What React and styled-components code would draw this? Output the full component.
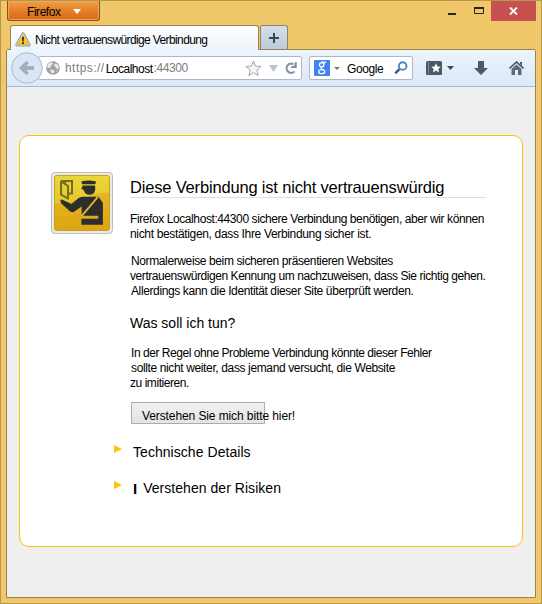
import React from "react";
import styled, { createGlobalStyle } from "styled-components";

const Global = createGlobalStyle`
  * { box-sizing: border-box; }
  body { margin: 0; font-family: "Liberation Sans", Arial, sans-serif; font-size: 12px; color: #000; }
  button { font: inherit; padding: 0; }
  svg { display: block; flex: none; }
`;

const Window = styled.div`
  width: 542px;
  height: 604px;
  border: 1px solid #b6974e;
  background: #f0c869;
  display: flex;
  flex-direction: column;
  padding: 0 5px 5px;
`;

const TitleBar = styled.header`
  height: 24px;
  display: flex;
  justify-content: space-between;
  align-items: flex-start;
`;

const MenuButton = styled.button`
  margin-left: 1px;
  width: 93px;
  height: 20px;
  border: 1px solid #8c4c1c;
  border-top: 0;
  border-radius: 0 0 3px 3px;
  background: linear-gradient(#f0a047, #e5842c 45%, #db6716);
  box-shadow: inset 0 0 0 1px #f1a65c;
  display: flex;
  align-items: center;
  padding: 1px 0 0 19px;
  gap: 12px;
`;

const Controls = styled.div`
  display: flex;
  align-items: flex-start;
`;

const Close = styled.button`
  width: 45px;
  height: 20px;
  border: 0;
  background: #c75050;
  display: flex;
  align-items: center;
  justify-content: center;
`;

const Tabs = styled.div`
  display: flex;
  height: 25px;
  padding-left: 4px;
  align-items: flex-start;
`;

const Tab = styled.div`
  width: 249px;
  height: 25px;
  border: 1px solid #9b8253;
  border-bottom: 0;
  border-radius: 3px 3px 0 0;
  background: linear-gradient(#fff, #edf4fc);
  display: flex;
  align-items: center;
  padding: 3px 0 0 4px;
  gap: 4px;
  position: relative;
  z-index: 1;
`;

const NewTab = styled.button`
  width: 28px;
  height: 24px;
  margin-left: 1px;
  border: 1px solid #8f8368;
  border-bottom: 0;
  border-radius: 2px 3px 0 0;
  background: linear-gradient(#d5dfe9, #bccbdb);
  display: flex;
  align-items: center;
  justify-content: center;
`;

const Frame = styled.main`
  flex: 1;
  margin-top: -1px;
  border: 1px solid #97834f;
  border-radius: 2px 2px 0 0;
  background: #efefef;
  display: flex;
  flex-direction: column;
`;

const Toolbar = styled.nav`
  height: 37px;
  border-bottom: 1px solid #a8bace;
  background: linear-gradient(#edf4fc, #dbe8f7);
  display: flex;
  align-items: center;
  padding: 0 10px 0 4px;
`;

const BackButton = styled.span`
  position: relative;
  z-index: 1;
`;

const Field = styled.div`
  width: ${(p) => p.$width}px;
  height: 24px;
  margin-left: ${(p) => p.$gap}px;
  padding-left: ${(p) => p.$inset}px;
  border: 1px solid #a9b9cb;
  border-radius: 2px;
  background: #fff;
  display: flex;
  flex: none;
  align-items: center;
`;

const Address = styled.div`
  display: flex;
  width: 180px;
  margin-left: 5px;
  padding-top: 1px;
`;

const Actions = styled.div`
  flex: 1;
  display: flex;
  align-items: center;
  padding-left: 13px;
`;

const Spacer = styled.span`
  flex: 0 0 ${(p) => p.$size}px;
`;

const Text = styled.span`
  display: block;
  white-space: nowrap;
  font-size: ${(p) => p.$size || 12}px;
  font-weight: ${(p) => (p.$bold ? 700 : 400)};
  line-height: ${(p) => p.$line || 15}px;
  letter-spacing: ${(p) => p.$track || 0}px;
  color: ${(p) => p.$color || "#000"};
  margin-left: ${(p) => p.$indent || 0}px;
  padding-top: ${(p) => p.$drop || 0}px;
`;

const Panel = styled.section`
  width: 504px;
  height: 412px;
  margin: 48px 0 0 12px;
  border: 1px solid #fcbf13;
  border-radius: 10px;
  background: #fff;
  padding: 36px 0 0 31px;
  display: flex;
  align-items: flex-start;
`;

const Badge = styled.div`
  width: 62px;
  height: 62px;
  border: 1px solid #bcbcbc;
  border-radius: 4px;
  background: #e9e9e9;
  padding: 2px;
`;

const Article = styled.article`
  width: 356px;
  margin-left: 17px;
`;

const Title = styled.h1`
  margin: 0;
  height: 26px;
  padding-top: 5px;
  border-bottom: 1px solid #dedede;
  font-weight: 400;
`;

const Paragraph = styled.div`
  margin-top: ${(p) => p.$top}px;
`;

const Subtitle = styled.h2`
  margin: 16px 0 0;
  font-weight: 400;
`;

const ActionButton = styled.button`
  width: 134px;
  height: 22px;
  margin: 11px 0 0 1px;
  border: 1px solid #acacac;
  background: linear-gradient(#f0f0f0, #e4e4e4);
  display: flex;
  padding: 6px 0 0 10px;
`;

const Disclosure = styled.div`
  height: 18px;
  margin: ${(p) => p.$top}px 0 0 -16px;
  display: flex;
  align-items: flex-start;
`;

const Caret = ({ w = 7, h = 4, color = "#3d4956" }) => (
  <svg width={w} height={h} viewBox="0 0 8 4" preserveAspectRatio="none"><path d="M0 0h8L4 4z" fill={color} /></svg>
);

const Marker = () => (
  <svg width="8" height="8" viewBox="0 0 8 8"><path d="M0 0L8 4L0 8z" fill="#ffc20e" /></svg>
);

const Warning = () => (
  <svg width="16" height="15" viewBox="0 0 16 15">
    <path d="M7 1.2Q8 0 9 1.2L15.2 12.5Q15.6 14 14 14H2Q.4 14 .8 12.5z" fill="#dedede" stroke="#929292" />
    <path d="M8 2.6L13.5 12.5H2.5z" fill="#f5cc16" stroke="#d9a900" strokeWidth=".6" />
    <path d="M7 5h2l-.4 4.5H7.4zM7.1 10.3h1.8V12H7.1z" fill="#222" />
  </svg>
);

const Back = () => (
  <svg width="32" height="32" viewBox="0 0 32 32">
    <circle cx="16" cy="16" r="15.3" fill="#dae6f3" stroke="#a9bace" />
    <path d="M8 16L15.4 8.7L18 11.2L15.2 14H23V18H15.2L18 20.8L15.4 23.3z" fill="#a2aebe" />
  </svg>
);

const Globe = () => (
  <svg width="14" height="14" viewBox="0 0 14 14">
    <circle cx="7" cy="7" r="6.8" fill="#a0a0a0" />
    <path d="M2 3L5 1.2L7 2L5.8 4L4.5 5L5 6.2L3.2 7.2L1.2 6zM8.7 2.5L11 2.8L12.7 5.5L12.5 8L10.5 7.5L9.5 5.8L8 5zM4 8.5L7 8.8L8.6 10L7 12.8L5 11.5zM10.5 9.5L12 9L10.8 11.2z" fill="#e9e9e9" />
  </svg>
);

const Star = () => (
  <svg width="17" height="17" viewBox="0 0 17 17">
    <path d="M8.5 1L10.6 6.1L16.1 6.5L11.9 10.1L13.2 15.6L8.5 12.6L3.8 15.6L5.1 10.1L.9 6.5L6.4 6.1z" fill="#f5f5f5" stroke="#a4a8ad" />
  </svg>
);

const Reload = () => (
  <svg width="12" height="12" viewBox="0 0 12 12">
    <path d="M9.6 9.4A4.6 4.6 0 1 1 8.4 2.2" fill="none" stroke="#8593a1" strokeWidth="2.1" />
    <path d="M11.8 0V6H5.8V4.3H8L9.8 2.5V0z" fill="#8593a1" />
  </svg>
);

const Google = () => (
  <svg width="16" height="16" viewBox="0 0 16 16">
    <rect width="16" height="16" rx="1" fill="#4283ef" />
    <ellipse cx="7.6" cy="4.8" rx="2.1" ry="2.2" fill="none" stroke="#fff" strokeWidth="1.3" />
    <path d="M7.6 2H12L11 3.1H9zM7.3 7Q5.8 8.4 8.2 9.2Q10.8 10 10.6 11.6" fill="none" stroke="#fff" />
    <ellipse cx="7.7" cy="11.7" rx="3" ry="2" fill="none" stroke="#fff" strokeWidth="1.2" />
  </svg>
);

const Magnifier = () => (
  <svg width="14" height="14" viewBox="0 0 14 14" fill="none">
    <path d="M1.2 12.4L5.4 8.2" stroke="#33608d" strokeWidth="2.5" />
    <circle cx="8.7" cy="5" r="3.8" stroke="#4688c3" strokeWidth="1.9" />
  </svg>
);

const Bookmarks = () => (
  <svg width="16" height="14" viewBox="0 0 16 14">
    <rect width="16" height="14" rx="1.5" fill="#4b5967" />
    <path d="M2.5 1v12" stroke="#7b8795" />
    <path d="M10 2.3L11.4 5.4L14.8 5.7L12.3 8L13 11.4L10 9.6L7 11.4L7.7 8L5.2 5.7L8.6 5.4z" fill="#fff" />
  </svg>
);

const Download = () => (
  <svg width="14" height="14" viewBox="0 0 14 14"><path d="M4 0h6v7h4l-7 7L0 7h4z" fill="#4c5a68" /></svg>
);

const Home = () => (
  <svg width="15" height="14" viewBox="0 0 15 14">
    <path d="M.5 7.5L7.5 1L14.5 7.5" fill="none" stroke="#4c5a68" strokeWidth="1.7" />
    <path d="M2.5 8L7.5 3.5L12.5 8V14H9V9H6V14H2.5z" fill="#5d6976" />
    <path d="M11 1h2v4l-2-2z" fill="#4c5a68" />
  </svg>
);

const Officer = () => (
  <svg width="56" height="56" viewBox="0 0 56 56">
    <defs>
      <linearGradient id="gold" x2="0" y2="1"><stop stopColor="#ead838" /><stop offset="1" stopColor="#e3b51c" /></linearGradient>
      <linearGradient id="amber" x2="0" y2="1"><stop stopColor="#e2b721" /><stop offset="1" stopColor="#dca613" /></linearGradient>
    </defs>
    <rect x=".5" y=".5" width="55" height="55" rx="2" fill="url(#gold)" stroke="#c9a11b" />
    <path d="M1 29Q25 27 38 20Q46 17 55 18V53Q55 55 53 55H3Q1 55 1 53z" fill="url(#amber)" />
    <path d="M7 6H18V18.5H15M7 6V19.5L14 23.5V11L7 6.5M11 6V9" fill="none" stroke="#786c24" strokeWidth="2" />
    <g fill="#2d2d2d">
      <path d="M27.3 6.4Q35 4.6 42 6.4L41.3 9.2H28.3zM28.5 10.4H41V12H41.3Q42 19.8 35.5 19.8Q31 19.8 30 15.5L27 13.2Q28.5 12.8 28.5 10.4z" />
      <path d="M6.4 25Q7.5 23.8 10 25.6L17.5 29L24 23.5Q26 21.7 29 21.7H43.3L27.6 40V31.5L20.5 36.5Q18.5 37.8 16.2 36.5L9 30Q6 27.5 6.4 25z" />
      <path d="M44.5 21.7L48.9 28V49.7H27.4V43.7H44.3V40.7H28.5z" />
    </g>
    <path d="M43.8 22L27.8 41" stroke="#e2ba24" strokeWidth="1.8" />
  </svg>
);

export default function App() {
  return (
    <>
      <Global />
      <Window>
        <TitleBar>
          <MenuButton>
            <Text $track={-0.45} $drop={2}>Firefox</Text>
            <Caret w={8} h={5} color="#fff" />
          </MenuButton>
          <Controls>
            <svg width="43" height="20" viewBox="0 0 43 20">
              <path d="M0 12h8v2H0z" fill="#29251c" />
              <path d="M26.5 7.5h9v5h-9z" fill="none" stroke="#29251c" />
              <path d="M26 6h10v2H26z" fill="#29251c" />
            </svg>
            <Close aria-label="Schließen">
              <svg width="9" height="8" viewBox="0 0 9 8"><path d="M1 .5L8 7.5M8 .5L1 7.5" stroke="#fff" strokeWidth="1.8" /></svg>
            </Close>
          </Controls>
        </TitleBar>
        <Tabs>
          <Tab>
            <Warning />
            <Text $track={-0.62} $drop={1}>Nicht vertrauenswürdige Verbindung</Text>
          </Tab>
          <NewTab aria-label="Neuer Tab">
            <svg width="10" height="10" viewBox="0 0 10 10"><path d="M4 0h2v4h4v2H6v4H4V6H0V4h4z" fill="#3b4652" /></svg>
          </NewTab>
        </Tabs>
        <Frame>
          <Toolbar>
            <BackButton><Back /></BackButton>
            <Field $width={264} $gap={-5} $inset={7}>
              <Globe />
              <Address>
                <Text $color="#7c7c7c" $track={0.45}>https://</Text>
                <Text $track={-0.5} $indent={1} $drop={1}>Localhost</Text>
                <Text $color="#7c7c7c" $track={-0.4} $indent={1}>:44300</Text>
              </Address>
              <Star />
              <Spacer $size={7} />
              <Caret w={9} h={7} color="#b8c3d0" />
              <Spacer $size={7} />
              <Reload />
            </Field>
            <Field $width={104} $gap={7} $inset={4}>
              <Google />
              <Spacer $size={4} />
              <Caret w={6} h={3} color="#777" />
              <Text $track={-0.4} $indent={7} $drop={3}>Google</Text>
              <Spacer $size={11} />
              <Magnifier />
            </Field>
            <Actions>
              <Bookmarks />
              <Spacer $size={5} />
              <Caret />
              <Spacer $size={20} />
              <Download />
              <Spacer $size={21} />
              <Home />
            </Actions>
          </Toolbar>
          <Panel>
            <Badge><Officer /></Badge>
            <Article>
              <Title><Text $size={16.5} $line={20} $track={-0.18}>Diese Verbindung ist nicht vertrauenswürdig</Text></Title>
              <Paragraph $top={14}>
                <Text $track={-0.41}>Firefox Localhost:44300 sichere Verbindung benötigen, aber wir können</Text>
                <Text $track={-0.34}>nicht bestätigen, dass Ihre Verbindung sicher ist.</Text>
              </Paragraph>
              <Paragraph $top={12}>
                <Text $track={-0.38} $indent={1}>Normalerweise beim sicheren präsentieren Websites</Text>
                <Text $track={-0.43}>vertrauenswürdigen Kennung um nachzuweisen, dass Sie richtig gehen.</Text>
                <Text $track={-0.38} $indent={1}>Allerdings kann die Identität dieser Site überprüft werden.</Text>
              </Paragraph>
              <Subtitle><Text $size={14} $line={17}>Was soll ich tun?</Text></Subtitle>
              <Paragraph $top={14}>
                <Text $track={-0.455} $indent={1}>In der Regel ohne Probleme Verbindung könnte dieser Fehler</Text>
                <Text $track={-0.37} $indent={1}>sollte nicht weiter, dass jemand versucht, die Website</Text>
                <Text $track={-0.45}>zu imitieren.</Text>
              </Paragraph>
              <ActionButton><Text $track={-0.1}>Verstehen Sie mich bitte hier!</Text></ActionButton>
              <Disclosure $top={21}>
                <Marker />
                <Text $size={14} $track={0.05} $indent={11}>Technische Details</Text>
              </Disclosure>
              <Disclosure $top={18}>
                <Marker />
                <Text $size={15} $bold $indent={11}>I</Text>
                <Text $size={14} $track={0.04} $indent={6}>Verstehen der Risiken</Text>
              </Disclosure>
            </Article>
          </Panel>
        </Frame>
      </Window>
    </>
  );
}
